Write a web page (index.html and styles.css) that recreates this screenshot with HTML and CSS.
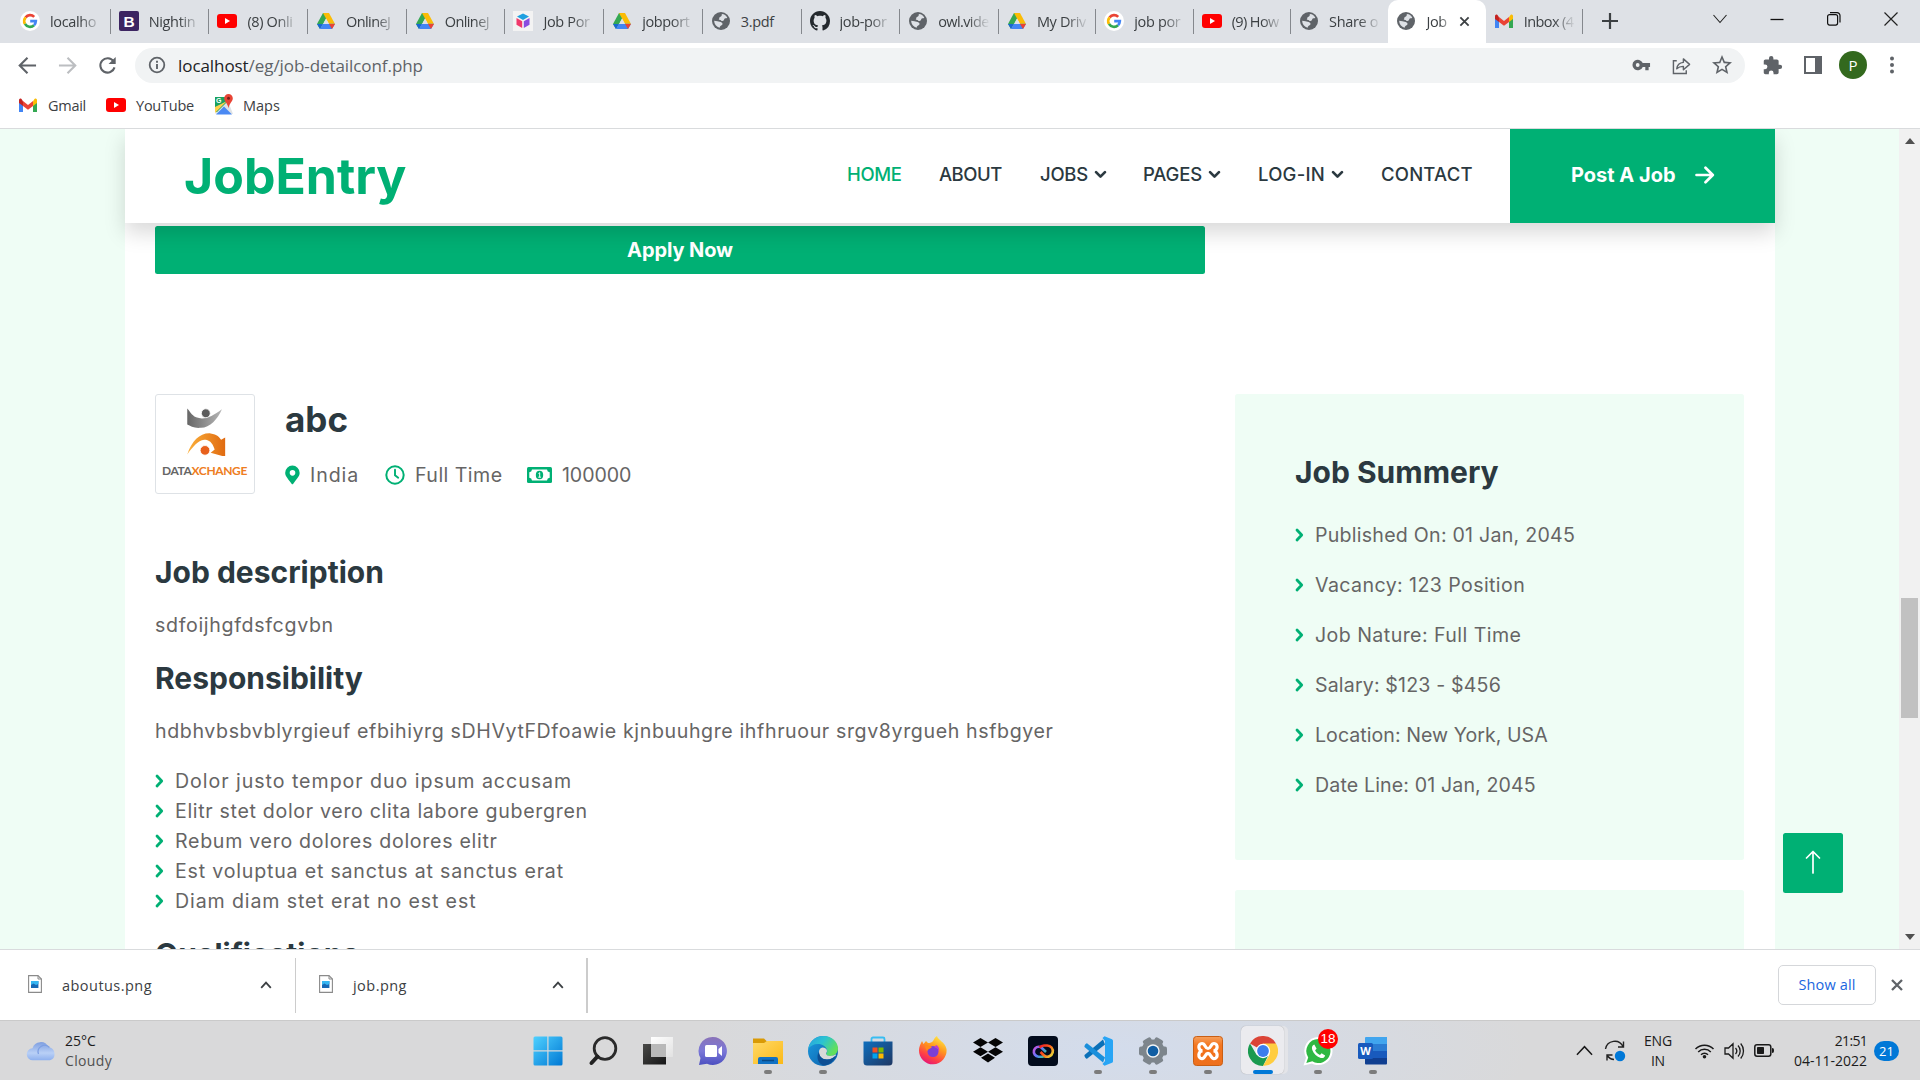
FILE: index.html
```html
<!DOCTYPE html>
<html lang="en">
<head>
<meta charset="utf-8">
<title>Job</title>
<link rel="stylesheet" href="styles.css">
</head>
<body>
<svg class="defs" aria-hidden="true">
  <defs>
    <linearGradient id="gWin" x1="0" y1="0" x2="1" y2="1"><stop offset="0" stop-color="#4fd1ff"/><stop offset="1" stop-color="#0078d4"/></linearGradient>
    <linearGradient id="gDark" x1="0" y1="0" x2="1" y2="1"><stop offset="0" stop-color="#4a4a48"/><stop offset="1" stop-color="#161616"/></linearGradient>
    <linearGradient id="gLight" x1="0" y1="0" x2="1" y2="1"><stop offset="0" stop-color="#fff"/><stop offset="1" stop-color="#e2e2e2"/></linearGradient>
    <linearGradient id="gChat" x1="0" y1="0" x2="0" y2="1"><stop offset="0" stop-color="#8a73b8"/><stop offset=".5" stop-color="#7b78d8"/><stop offset="1" stop-color="#4c4fc0"/></linearGradient>
    <linearGradient id="gFolder" x1="0" y1="0" x2="1" y2="1"><stop offset="0" stop-color="#ffd968"/><stop offset="1" stop-color="#fbb916"/></linearGradient>
    <linearGradient id="gEdgeTop" x1="0" y1="0" x2="1" y2=".5"><stop offset="0" stop-color="#2a9fe0"/><stop offset=".5" stop-color="#2bc3d2"/><stop offset="1" stop-color="#62e05a"/></linearGradient>
    <linearGradient id="gEdgeLow" x1="0" y1="0" x2="1" y2="1"><stop offset="0" stop-color="#1b9de2"/><stop offset="1" stop-color="#0c59a4"/></linearGradient>
    <linearGradient id="gStore" x1="0" y1="0" x2="1" y2="1"><stop offset="0" stop-color="#0f6fbe"/><stop offset="1" stop-color="#1f3763"/></linearGradient>
    <linearGradient id="gFox" x1=".8" y1="0" x2=".3" y2="1"><stop offset="0" stop-color="#fff04a"/><stop offset=".4" stop-color="#ff9a1e"/><stop offset=".75" stop-color="#ff3f45"/><stop offset="1" stop-color="#e3157a"/></linearGradient>
    <linearGradient id="gCloud" x1="0" y1="0" x2="0" y2="1"><stop offset="0" stop-color="#7f9fe0"/><stop offset=".6" stop-color="#b9d0f6"/><stop offset="1" stop-color="#8eb0ee"/></linearGradient>
    <linearGradient id="gCcL" gradientUnits="userSpaceOnUse" x1="5" y1="10" x2="19" y2="20"><stop offset="0" stop-color="#e34bd6"/><stop offset=".5" stop-color="#5b7cff"/><stop offset="1" stop-color="#2fd67a"/></linearGradient>
    <linearGradient id="gCcR" gradientUnits="userSpaceOnUse" x1="11" y1="9" x2="25" y2="20"><stop offset="0" stop-color="#e8142d"/><stop offset=".5" stop-color="#ff5a1a"/><stop offset="1" stop-color="#e6e23c"/></linearGradient>
    <linearGradient id="gXampp" x1="0" y1="0" x2="0" y2="1"><stop offset="0" stop-color="#f6a05c"/><stop offset=".3" stop-color="#f4761f"/><stop offset="1" stop-color="#ee6f1c"/></linearGradient>
    <linearGradient id="gOrange" x1="0" y1="0" x2="1" y2="0"><stop offset="0" stop-color="#fbb03b"/><stop offset="1" stop-color="#e06a10"/></linearGradient>
    <linearGradient id="gGrey" x1="0" y1="0" x2="1" y2="0"><stop offset="0" stop-color="#666"/><stop offset="1" stop-color="#b5b5b5"/></linearGradient>
  </defs>
  <symbol id="google" viewBox="0 0 20 20"><circle cx="10" cy="10" r="10" fill="#fff"/><g fill="none" stroke-width="2.7"><path d="M5.6 6.3A5.8 5.8 0 0 1 14.2 5.9" stroke="#ea4335"/><path d="M5 12.9A5.8 5.8 0 0 1 5.6 6.3" stroke="#fbbc05"/><path d="M14 14.2A5.8 5.8 0 0 1 5 12.9" stroke="#34a853"/><path d="M10.2 10.2H15.8A5.8 5.8 0 0 1 14 14.2" stroke="#4285f4"/></g></symbol>
  <symbol id="boot" viewBox="0 0 20 20"><rect width="20" height="20" rx="2" fill="#3d2562"/><text x="10" y="15.6" text-anchor="middle" font-family="Liberation Sans" font-weight="700" font-size="15.5" fill="#fff">B</text></symbol>
  <symbol id="yt" viewBox="0 0 20 20"><rect y="3" width="20" height="14" rx="3" fill="#f00"/><path d="M8 7v6l5-3z" fill="#fff"/></symbol>
  <symbol id="drive" viewBox="0 0 20 20"><path d="M7 2h6L7 13.500 4 18 1 13z" fill="#34a853"/><path d="M7 2h6l6 11h-6z" fill="#fbbc05"/><path d="M1 13h5.700L4 18z" fill="#1967d2"/><path d="M6.800 12.800H19L16 18H4z" fill="#4285f4"/><path d="M13 13h6l-3 5z" fill="#ea4335"/><path d="M10 7.500l3 5.400H7z" fill="#dee1e6"/></symbol>
  <symbol id="cube" viewBox="0 0 20 20"><path fill="#f3f3f3" d="M0 0h20v20H0z"/><path d="M10 2.500l6 3-6 3.400-6-3.400z" fill="#1e9fe0"/><path d="M3.500 7l5.700 3.300V17L3.500 13.800z" fill="#f0386b"/><path d="M16.500 7l-5.700 3.300V17l5.700-3.200z" fill="#8a4be0"/></symbol>
  <symbol id="globe" viewBox="0 0 20 20"><circle cx="10" cy="10" r="9" fill="#5f6368"/><path d="M10.800 3.100c2.500.2 4.500 1.500 5.500 3.700-1 .8-2.500.2-3.200 1.400.6 1.300-1.300 1.700-2.600 1.800-.5-1.200-1.700-1-2.800-1.200 1-.7 0-2 1.300-2.700 1.300-.4 2-1.500 1.800-3zM3.200 9.800c2 .3 4.500.7 6.500 1.200 1.300.5 2.300 1.300 1.600 2.700-.8.9-2.400.7-2.700 3-3-.6-5.400-3.500-5.400-6.900z" fill="#dee1e6"/></symbol>
  <symbol id="github" viewBox="0 0 16 16"><path fill="#24292e" d="M8 0C3.580 0 0 3.580 0 8c0 3.540 2.290 6.530 5.470 7.590.4.070.55-.17.55-.38 0-.19-.01-.82-.01-1.490-2.010.37-2.530-.49-2.690-.94-.09-.23-.48-.94-.82-1.130-.28-.15-.68-.52-.01-.53.63-.01 1.080.58 1.230.82.72 1.210 1.870.87 2.330.66.07-.52.28-.87.51-1.070-1.780-.2-3.640-.89-3.640-3.950 0-.87.31-1.590.82-2.150-.08-.2-.36-1.020.08-2.120 0 0 .67-.21 2.200.82.64-.18 1.320-.27 2-.27s1.360.09 2 .27c1.530-1.040 2.200-.82 2.200-.82.44 1.100.16 1.920.08 2.120.51.56.82 1.270.82 2.150 0 3.070-1.870 3.750-3.650 3.950.29.25.54.73.54 1.480 0 1.070-.01 1.930-.01 2.200 0 .21.15.46.55.38A8.010 8.010 0 0 0 16 8c0-4.420-3.580-8-8-8z"/></symbol>
  <symbol id="gmail" viewBox="0 0 20 20"><path d="M1 4.500V17h4V8z" fill="#4285f4"/><path d="M19 4.500V17h-4V8z" fill="#34a853"/><path d="M1 5.500V8l4 3V6.200L3.500 4C2 3 1 4 1 5.500z" fill="#c5221f"/><path d="M19 5.500V8l-4 3V6.200L16.500 4C18 3 19 4 19 5.500z" fill="#fbbc04"/><path d="M5 6l5 3.900L15 6v5l-5 3.800L5 11z" fill="#ea4335"/></symbol>
  <symbol id="maps" viewBox="0 0 20 24"><path d="M1 4h12v17L1 19z" fill="#1aa15f"/><path d="M1 21L14 8l5 13z" fill="#dfe3e6"/><path d="M2 21.500l8-8 8 8z" fill="#4a89f3"/><path d="M1 14v6L13 8z" fill="#ffd04c"/><text x="2" y="10" font-family="Liberation Sans" font-size="7" font-weight="700" fill="#fff">G</text><path d="M14.500 1a4.300 4.300 0 0 1 4.300 4.300c0 3.500-3.500 4.700-4.300 10-.8-5.300-4.300-6.500-4.300-10A4.300 4.300 0 0 1 14.500 1z" fill="#e84435"/><circle cx="14.500" cy="5.300" r="1.500" fill="#7a1f18"/></symbol>
  <symbol id="chev" viewBox="0 0 9 14"><path d="M2 2l4.700 5L2 12" fill="none" stroke="currentColor" stroke-width="2.800" stroke-linecap="round" stroke-linejoin="round"/></symbol>
  <symbol id="down" viewBox="0 0 14 10"><path d="M2.200 2.200L7 7l4.800-4.800" fill="none" stroke="currentColor" stroke-width="2.900" stroke-linecap="round" stroke-linejoin="round"/></symbol>
  <symbol id="file" viewBox="0 0 14 18"><path d="M.6.6h9.400l3.400 3.400v13.400H.6z" fill="#fff" stroke="#8a8a8a" stroke-width="1.100"/><path d="M10 .6V4h3.400" fill="none" stroke="#8a8a8a"/><path d="M3 6h7.400v7H3z" fill="#1668b5"/><path d="M3 6h7.400v3L8 10 5.500 8.500 3 10z" fill="#35b6f2"/></symbol>
  <symbol id="up" viewBox="0 0 12 8"><path d="M1.200 6.800L6 1.600l4.800 5.200" fill="none" stroke="currentColor" stroke-width="1.800"/></symbol>
</svg>

<div class="tabs">
  <div class="tab"><svg><use href="#google"/></svg><span>localho</span></div>
  <div class="tab"><svg><use href="#boot"/></svg><span>Nightin</span></div>
  <div class="tab"><svg><use href="#yt"/></svg><span>(8) Onli</span></div>
  <div class="tab"><svg><use href="#drive"/></svg><span class="tight">OnlineJ</span></div>
  <div class="tab"><svg><use href="#drive"/></svg><span class="tight">OnlineJ</span></div>
  <div class="tab"><svg><use href="#cube"/></svg><span>Job Por</span></div>
  <div class="tab"><svg><use href="#drive"/></svg><span>jobport</span></div>
  <div class="tab"><svg><use href="#globe"/></svg><span class="full">3.pdf</span></div>
  <div class="tab"><svg><use href="#github"/></svg><span>job-por</span></div>
  <div class="tab"><svg><use href="#globe"/></svg><span class="tight">owl.vide</span></div>
  <div class="tab narrow"><svg><use href="#drive"/></svg><span>My Driv</span></div>
  <div class="tab narrow"><svg><use href="#google"/></svg><span>job por</span></div>
  <div class="tab narrow"><svg><use href="#yt"/></svg><span class="tight">(9) How</span></div>
  <div class="tab narrow last"><svg><use href="#globe"/></svg><span>Share o</span></div>
  <div class="tab narrow active"><svg><use href="#globe"/></svg><span>Job</span><svg class="x" viewBox="0 0 12 12"><path d="M1.500 1.500l9 9M10.500 1.500l-9 9" stroke="#3c4043" stroke-width="2"/></svg></div>
  <div class="tab narrow"><svg><use href="#gmail"/></svg><span class="tight">Inbox (4</span></div>
  <svg class="plus" viewBox="0 0 16 16"><path d="M8 0v16M0 8h16" stroke="#3c4043" stroke-width="2.200"/></svg>
  <div class="win">
    <svg viewBox="0 0 16 16"><path d="M1.500 4L8 11.500 14.500 4" fill="none" stroke="#222" stroke-width="1.100"/></svg>
    <svg viewBox="0 0 16 16"><path d="M1.500 8.500h13" stroke="#111" stroke-width="1.300"/></svg>
    <svg viewBox="0 0 16 16"><rect x="1.600" y="3.600" width="10" height="10.500" rx="2" fill="none" stroke="#111" stroke-width="1.200"/><path d="M4 1.600h7a3 3 0 0 1 3 3v7" fill="none" stroke="#111" stroke-width="1.200"/></svg>
    <svg viewBox="0 0 16 16"><path d="M1.500 1.500l13 13M14.500 1.500l-13 13" stroke="#222" stroke-width="1.200"/></svg>
  </div>
</div>

<div class="toolbar">
  <div class="navbtns">
    <svg viewBox="0 0 20 20"><path d="M19 10H2M10 1.800L1.800 10l8.200 8.200" fill="none" stroke="#5f6368" stroke-width="2.200"/></svg>
    <svg viewBox="0 0 20 20"><path d="M1 10h17M10 1.800l8.200 8.200-8.200 8.200" fill="none" stroke="#bcbec1" stroke-width="2.200"/></svg>
    <svg viewBox="0 0 20 20"><path d="M16.300 5.500A7.600 7.600 0 1 0 17.400 12" fill="none" stroke="#5f6368" stroke-width="2.200"/><path d="M18.600 1v7.500h-7.500z" fill="#5f6368"/></svg>
  </div>
  <div class="omni">
    <svg viewBox="0 0 18 18"><circle cx="9" cy="9" r="7.300" fill="none" stroke="#5f6368" stroke-width="1.800"/><path d="M9 8v5M9 4.800v2" stroke="#5f6368" stroke-width="1.900"/></svg>
    <span class="url"><b>localhost</b>/eg/job-detailconf.php</span>
    <svg class="key" viewBox="0 0 20 12"><path fill="#5f6368" fill-rule="evenodd" d="M11.300 4A5.600 5.600 0 1 0 11.300 8H14v3.500h3.500V8H19V4zM6 4a2 2 0 1 1 0 4 2 2 0 0 1 0-4z"/></svg>
    <svg viewBox="0 0 20 20"><path d="M5 5H1.500v13.500H15V15" fill="none" stroke="#5f6368" stroke-width="1.500"/><path d="M5 13.500c.5-4.500 3-6.500 7-6.800V3l6.500 5.800-6.500 5.700v-3.600c-3-.1-5 .6-7 2.600z" fill="none" stroke="#5f6368" stroke-width="1.500" stroke-linejoin="round"/></svg>
    <svg viewBox="0 0 24 24"><path fill="#5f6368" d="M22 9.240l-7.190-.62L12 2 9.190 8.630 2 9.240l5.460 4.730L5.820 21 12 17.270 18.180 21l-1.630-7.030L22 9.240zM12 15.400l-3.760 2.270 1-4.280-3.320-2.880 4.380-.38L12 6.100l1.710 4.040 4.380.38-3.320 2.880 1 4.280L12 15.400z"/></svg>
  </div>
  <svg class="t1" viewBox="0 0 24 24"><path fill="#5f6368" d="M20.500 11H19V7c0-1.100-.9-2-2-2h-4V3.500a2.500 2.500 0 0 0-5 0V5H4c-1.100 0-1.990.9-1.990 2v3.800H3.500a2.700 2.700 0 0 1 0 5.400H2V20c0 1.100.9 2 2 2h3.800v-1.500a2.700 2.700 0 0 1 5.400 0V22H17c1.100 0 2-.9 2-2v-4h1.500a2.500 2.500 0 0 0 0-5z"/></svg>
  <svg class="t2" viewBox="0 0 18 18"><path fill="#5f6368" fill-rule="evenodd" d="M0 0h18v18H0zM2 2v14h9V2z"/></svg>
  <div class="avatar">P</div>
  <svg class="t3" viewBox="0 0 4 18"><g fill="#5f6368"><circle cx="2" cy="2.500" r="2"/><circle cx="2" cy="9" r="2"/><circle cx="2" cy="15.500" r="2"/></g></svg>
</div>

<div class="marks">
  <svg><use href="#gmail"/></svg><span class="m1">Gmail</span>
  <svg><use href="#yt"/></svg><span class="m2">YouTube</span>
  <svg class="mapi"><use href="#maps"/></svg><span class="m3">Maps</span>
</div>

<div class="view">
  <main class="sheet">
    <header>
      <div class="brand">JobEntry</div>
      <nav>
        <a class="n1 on"><span>HOME</span></a>
        <a class="n2"><span>ABOUT</span></a>
        <a class="n3"><span>JOBS</span><svg><use href="#down"/></svg></a>
        <a class="n4"><span>PAGES</span><svg><use href="#down"/></svg></a>
        <a class="n5"><span>LOG-IN</span><svg><use href="#down"/></svg></a>
        <a class="n6"><span>CONTACT</span></a>
      </nav>
      <a class="post"><span>Post A Job</span><svg viewBox="0 0 20 18"><path d="M1.500 9h16M10.500 1.700L17.800 9l-7.300 7.300" fill="none" stroke="#fff" stroke-width="2.700" stroke-linecap="round" stroke-linejoin="round"/></svg></a>
    </header>
    <button class="apply">Apply Now</button>
    <div class="cols">
      <section class="left">
        <div class="head">
          <div class="logo">
            <svg viewBox="0 0 60 62"><path d="M8 3c3 3 5 8 11 11 10 4 20-1 32-10-5 12-15 23-26 23-8 1-13-2-17-4z" fill="url(#gGrey)"/><circle cx="31" cy="9" r="5.500" fill="#5c5c5c" stroke="#fff"/><path d="M8 60c6-17 16-27 29-26 8 1 11 5 13 8l5-3v24l-18-5 5-4c-3-9-7-12-13-12-8 1-14 9-21 18z" fill="url(#gOrange)"/><circle cx="30" cy="55" r="6" fill="#e8601c" stroke="#fff"/></svg>
            <div class="lname">DATA<i>XCHANGE</i></div>
          </div>
          <div>
            <h3>abc</h3>
            <div class="meta">
              <svg class="pin" viewBox="0 0 16 20"><path fill="#00b074" fill-rule="evenodd" d="M7.200 19.600C1.500 12 .2 10.700.2 7.600a7.700 7.700 0 0 1 15.400 0c0 3.100-1.200 4.300-7 12-.4.500-1 .5-1.400 0zM8 4.700a3 3 0 1 0 0 6 3 3 0 0 0 0-6z"/></svg><span class="s1">India</span>
              <svg class="clk" viewBox="0 0 20 20"><circle cx="10" cy="10" r="8.700" fill="none" stroke="#00b074" stroke-width="2"/><path d="M10 4.800v5.400l3.200 2.500" fill="none" stroke="#00b074" stroke-width="1.900" stroke-linecap="round"/></svg><span class="s2">Full Time</span>
              <svg class="bill" viewBox="0 0 25 16"><rect width="25" height="16" rx="1.500" fill="#00b074"/><path d="M5 2.500h15a3 3 0 0 0 2.700 2.700v5.600A3 3 0 0 0 20 13.500H5a3 3 0 0 0-2.700-2.700V5.200A3 3 0 0 0 5 2.500z" fill="#fff"/><ellipse cx="12.500" cy="8" rx="3.700" ry="4.300" fill="#00b074"/><path d="M11.500 6.500l1.200-.8v4.500M11.300 10.200h2.600" stroke="#fff" fill="none"/></svg><span class="s3">100000</span>
            </div>
          </div>
        </div>
        <h4>Job description</h4>
        <p class="p1">sdfoijhgfdsfcgvbn</p>
        <h4>Responsibility</h4>
        <p class="p2">hdbhvbsbvblyrgieuf efbihiyrg sDHVytFDfoawie kjnbuuhgre ihfhruour srgv8yrgueh hsfbgyer</p>
        <ul class="duties">
          <li><svg><use href="#chev"/></svg><span>Dolor justo tempor duo ipsum accusam</span></li>
          <li><svg><use href="#chev"/></svg><span>Elitr stet dolor vero clita labore gubergren</span></li>
          <li><svg><use href="#chev"/></svg><span>Rebum vero dolores dolores elitr</span></li>
          <li><svg><use href="#chev"/></svg><span>Est voluptua et sanctus at sanctus erat</span></li>
          <li><svg><use href="#chev"/></svg><span>Diam diam stet erat no est est</span></li>
        </ul>
        <h4>Qualifications</h4>
      </section>
      <aside>
        <div class="card">
          <h4>Job Summery</h4>
          <ul class="facts">
            <li><svg><use href="#chev"/></svg><span>Published On: 01 Jan, 2045</span></li>
            <li><svg><use href="#chev"/></svg><span>Vacancy: 123 Position</span></li>
            <li><svg><use href="#chev"/></svg><span>Job Nature: Full Time</span></li>
            <li><svg><use href="#chev"/></svg><span>Salary: $123 - $456</span></li>
            <li><svg><use href="#chev"/></svg><span>Location: New York, USA</span></li>
            <li><svg><use href="#chev"/></svg><span>Date Line: 01 Jan, 2045</span></li>
          </ul>
        </div>
        <div class="card"></div>
      </aside>
    </div>
  </main>
  <a class="totop"><svg viewBox="0 0 16 24"><path d="M8 23V1.500M1.500 8L8 1.500 14.500 8" fill="none" stroke="#fff" stroke-width="1.700" stroke-linecap="round" stroke-linejoin="round"/></svg></a>
  <div class="scroll">
    <svg viewBox="0 0 10 6"><path d="M0 6h10L5 0z" fill="#505050"/></svg>
    <div class="thumb"></div>
    <svg viewBox="0 0 10 6"><path d="M0 0h10L5 6z" fill="#505050"/></svg>
  </div>
</div>

<div class="downloads">
  <div class="dl"><svg class="f"><use href="#file"/></svg><span>aboutus.png</span><svg class="u"><use href="#up"/></svg></div>
  <div class="dl second"><svg class="f"><use href="#file"/></svg><span>job.png</span><svg class="u"><use href="#up"/></svg></div>
  <button class="showall">Show all</button>
  <svg class="dx" viewBox="0 0 12 12"><path d="M1 1l10 10M11 1L1 11" stroke="#5f6368" stroke-width="2.300"/></svg>
</div>

<div class="taskbar">
  <div class="weather">
    <svg viewBox="0 0 30 20"><path d="M6.500 19.300a6 6 0 0 1-.5-12 8.500 8.500 0 0 1 16-1 6.700 6.700 0 0 1 1.500 13z" fill="url(#gCloud)"/><path d="M12 13a6.500 6.500 0 0 1 11-6.500" fill="none" stroke="#7d9fe3" stroke-width="1.300"/></svg>
    <div><span>25°C</span><em>Cloudy</em></div>
  </div>
  <div class="apps">
    <div class="app"><svg viewBox="0 0 30 30"><path fill="url(#gWin)" d="M.5 2a1.500 1.500 0 0 1 1.500-1.500h12.300v13.800H.5zM15.500.5h12.500A1.500 1.500 0 0 1 29.500 2v12.300h-14zM.5 15.500h13.800v14H2A1.500 1.500 0 0 1 .5 28zM15.500 15.500h14V28a1.500 1.500 0 0 1-1.500 1.500H15.500z"/></svg></div>
    <div class="app"><svg viewBox="0 0 30 30"><circle cx="17" cy="12.500" r="10.800" fill="none" stroke="#2a2a2a" stroke-width="2.800"/><path d="M9.500 20.500l-6 6.500" stroke="#222" stroke-width="4" stroke-linecap="round"/></svg></div>
    <div class="app"><svg viewBox="0 0 30 30"><path d="M0 8h23v20.500H0z" fill="url(#gDark)"/><rect x="8" y="1" width="22" height="20" fill="url(#gLight)"/><path d="M8 8h15v13H8z" fill="#b9b9b9"/></svg></div>
    <div class="app"><svg viewBox="0 0 30 30"><path d="M15 1a14 14 0 1 1-6 26.700L1 29l1.500-7A14 14 0 0 1 15 1z" fill="url(#gChat)"/><rect x="7" y="9" width="12" height="12" rx="1.500" fill="#fff"/><path d="M20.500 13l3.500-3v10l-3.500-3z" fill="#fff"/></svg></div>
    <div class="app run"><svg viewBox="0 0 30 30"><path d="M0 2.500h11l3 3v6H0z" fill="#d99a06"/><path d="M0 7h11l3-2h16v23H0z" fill="url(#gFolder)"/><path d="M5 28v-5a2 2 0 0 1 2-2h16a2 2 0 0 1 2 2v5z" fill="#1272c4"/><path d="M9 24.500h12" stroke="#0a4a86" stroke-width="1.500"/></svg></div>
    <div class="app run"><svg viewBox="0 0 30 30"><circle cx="15" cy="15" r="15" fill="url(#gEdgeLow)"/><path d="M.2 13C1.500 5 8 0 15.500 0 24 0 30 6 30 12.500c0 5-4 7.500-7.800 7.500-3 0-4.500-1-4.200-2 .8-1 1.500-2.300 1-4C18 10.500 14.500 8 10 8 5.500 8 2 10 .2 13z" fill="url(#gEdgeTop)"/><path d="M11 16c0-2.500 1.300-4.200 3.500-4.500 2.500 0 4.500 1.500 4.500 3.500 0 1.200-1 2-1 3 .3 1.300 2 2 4.200 2 2.300 0 4-.8 5.300-1.500.5 0 .8.300.4 1C26 21.500 23 23.500 19 23.500c-5 0-8-3.500-8-7.500z" fill="#d9d9d9"/><path d="M11 16c0 4 3 7.500 8 7.500 4 0 7-2 8.500-4 .6.300-2.500 8-10.500 10-4 0-7.500-4-7.500-8.500 0-2 .5-4 1.500-5z" fill="#0e4f94"/></svg></div>
    <div class="app"><svg viewBox="0 0 30 30"><path d="M8.500 7V3a1.500 1.500 0 0 1 1.500-1.500h10A1.500 1.500 0 0 1 21.500 3v4" fill="none" stroke="#38bdf2" stroke-width="1.800"/><path d="M.5 5.500h29V26a3.500 3.500 0 0 1-3.500 3.500H4A3.500 3.500 0 0 1 .5 26z" fill="url(#gStore)"/><path d="M9.500 11.500h5v5h-5z" fill="#f25022"/><path d="M15.500 11.500h5v5h-5z" fill="#7fba00"/><path d="M9.500 17.500h5v5h-5z" fill="#00a4ef"/><path d="M15.500 17.500h5v5h-5z" fill="#ffb900"/></svg></div>
    <div class="app"><svg viewBox="0 0 30 30"><path d="M19 0c1 4 8 6 9.500 13A13.800 13.800 0 1 1 1 14c0-3 1.500-6 3-9l1.500 3L8 5l2 2c2 0 4-.5 5-2s2-4 4-5z" fill="url(#gFox)"/><circle cx="15" cy="15.500" r="5.500" fill="#7b3fd6"/><path d="M7 9c3 0 4 1 7 2-2 2-4 2-5 4-1-2-2-3-2-6z" fill="#ff8a1c"/><path d="M18 9c3 1 4 5 2.500 8 1-3-1-5-4-5.500z" fill="#c03bd0"/></svg></div>
    <div class="app"><svg viewBox="0 0 30 30"><path d="M7.500 2L15 6.500 7.500 11 0 6.500zM22.500 2L30 6.500 22.500 11 15 6.500zM7.500 11.200L15 15.700 7.500 20.200 0 15.700zM22.500 11.200L30 15.700l-7.500 4.500L15 15.700zM15 17.500l7 4.300-7 4.700-7-4.700z" fill="#050505"/></svg></div>
    <div class="app"><svg viewBox="0 0 30 30"><rect width="30" height="30" rx="4" fill="#020b1c"/><path d="M18 19.500a6 6 0 0 1-4 1.200h-3.500a5 5 0 1 1 2.500-9.500L18 16" fill="none" stroke="url(#gCcL)" stroke-width="2.600"/><path d="M11.500 11.500A6.500 6.500 0 0 1 16 9.500h3a5.600 5.600 0 1 1-2.500 10.500L12.500 16" fill="none" stroke="url(#gCcR)" stroke-width="2.600"/></svg></div>
    <div class="app run"><svg viewBox="0 0 30 30"><path d="M1.500 19L20 3.500l2 5-18 14.300c-1 0-3-2.300-2.500-3.800z" fill="#0a70b8"/><path d="M1.500 11L20 26.500l2-5L4 7.200C3 7.200 1 9.500 1.500 11z" fill="#1a8fdb"/><path d="M21.500.3L29 3.300q1 .5 1 1.500v20.400q0 1-1 1.500l-7.500 3L19.500 28l2.500-3V5l-2.500-3z" fill="#28a5f5"/></svg></div>
    <div class="app run"><svg viewBox="0 0 30 30"><g fill="#7d858c"><circle cx="15" cy="15" r="11.500"/><rect x="10.500" y="1" width="9" height="28" rx="2" transform="rotate(30 15 15)"/><rect x="10.500" y="1" width="9" height="28" rx="2" transform="rotate(90 15 15)"/><rect x="10.500" y="1" width="9" height="28" rx="2" transform="rotate(150 15 15)"/></g><circle cx="15" cy="15" r="6.700" fill="#f2f4f6"/><circle cx="15" cy="15" r="5.300" fill="#115ea3"/></svg></div>
    <div class="app run"><svg viewBox="0 0 30 30"><rect x=".5" y=".5" width="29" height="29" rx="3" fill="url(#gXampp)" stroke="#c95f14"/><path d="M9.500 14.800C5 15 4.500 7.500 9 7.500c3.500 0 3 5 6 5s2.500-5 6-5c4.500 0 4 7.500-.5 7.300 4.500-.2 5 7.800.5 7.800-3.500 0-3-5.300-6-5.300s-2.500 5.300-6 5.300c-4.500 0-4-8 .5-7.800z" fill="none" stroke="#fff" stroke-width="3.200"/></svg></div>
    <div class="app run chrome"><svg viewBox="0 0 30 30"><path d="M15 15L2 7.500A15 15 0 0 1 28 7.500z" fill="#db4437"/><path d="M8.500 18.700L15 15l5 5-5 10A15 15 0 0 1 2 7.500z" fill="#1a9a50"/><path d="M21.500 18.700L15 30A15 15 0 0 0 28 7.500H15z" fill="#ffcd40"/><circle cx="15" cy="15" r="7.200" fill="#fff"/><circle cx="15" cy="15" r="5.900" fill="#3b7ded"/></svg></div>
    <div class="app run"><svg viewBox="0 0 30 30"><path d="M15.500 1A14 14 0 0 1 15.500 29c-2.500 0-4.700-.5-6.500-1.600L.5 29.500 3 21.700A14 14 0 0 1 15.500 1z" fill="#fff"/><path d="M15.500 3A12 12 0 1 1 9.300 25.300l-6 1.800 1.900-5.700A12 12 0 0 1 15.500 3z" fill="#2fb843"/><path d="M11.300 8.500c-2 .5-3 2.700-2 5.500 1.500 4 4.500 6.800 8.500 8 2.200.5 4-.7 4.300-2.500l-3.500-2.200-1.600 1.700c-2.500-1-4-2.600-4.900-4.700l1.500-1.600z" fill="#fff"/></svg><span class="badge">18</span></div>
    <div class="app run"><svg viewBox="0 0 30 30"><path d="M8 1h21v7H7V2q0-1 1-1z" fill="#41a5ee"/><path d="M7 8h22v7H7z" fill="#2b7cd3"/><path d="M7 15h22v7H7z" fill="#185abd"/><path d="M7 22h22v5.500q0 1-1 1H8q-1 0-1-1z" fill="#103f91"/><rect y="7" width="15" height="16" rx="1.500" fill="#185abd"/><text x="7.500" y="19" text-anchor="middle" font-family="Open Sans" font-weight="700" font-size="11" fill="#fff">W</text></svg></div>
  </div>
  <div class="tray">
    <svg class="y1" viewBox="0 0 18 11"><path d="M1 10l8-8.500L17 10" fill="none" stroke="#1a1a1a" stroke-width="1.600"/></svg>
    <svg class="y2" viewBox="0 0 22 22"><path d="M1.500 9A9.300 9.300 0 0 1 19 6.500M19.500 1.500v5.500H14M10 19.500A9 9 0 0 1 3.500 16M3 20.500V15h5.500" fill="none" stroke="#222" stroke-width="1.400"/><circle cx="16" cy="16" r="5.200" fill="#0078d7"/></svg>
    <div class="lang"><span>ENG</span><span>IN</span></div>
    <svg class="y3" viewBox="0 0 20 16"><g fill="none" stroke="#1a1a1a" stroke-width="1.500"><path d="M1 6a12.500 12.500 0 0 1 18 0M3.700 9a8.700 8.700 0 0 1 12.600 0M6.500 11.800a5 5 0 0 1 7 0"/></g><circle cx="10" cy="13.800" r="1.800" fill="#1a1a1a"/></svg>
    <svg class="y4" viewBox="0 0 21 18"><g fill="none" stroke="#1a1a1a" stroke-width="1.300"><path d="M1 6h3.500L9 1.800v14.400L4.500 12H1zM11.500 6a4.500 4.500 0 0 1 0 6M14 3.500a8 8 0 0 1 0 11M16.700 1.500a11.500 11.500 0 0 1 0 15"/></g></svg>
    <svg class="y5" viewBox="0 0 20 13"><rect x=".8" y=".8" width="16" height="11.400" rx="2.200" fill="none" stroke="#1a1a1a" stroke-width="1.500"/><rect x="3" y="3" width="7" height="7" rx=".7" fill="#1a1a1a"/><path d="M18 4v5c1.500 0 2-.8 2-2.500S19.500 4 18 4z" fill="#1a1a1a"/></svg>
    <div class="clock"><span class="time">21:51</span><span>04-11-2022</span></div>
    <div class="note">21</div>
  </div>
</div>
</body>
</html>
```
FILE: styles.css
```css
* { box-sizing: border-box; }
body { margin: 0; width: 1920px; height: 1080px; overflow: hidden; display: flex; flex-direction: column; background: #fff; font-family: "Open Sans", "Noto Sans", sans-serif; font-size: 14.5px; color: #3c4043; }
svg { display: block; flex: none; }
span { white-space: nowrap; }
button { font: inherit; border: 0; padding: 0; }
h3, h4, p, ul { margin: 0; padding: 0; list-style: none; }
.defs { position: absolute; left: 0; top: 0; width: 0; height: 0; }

/* Tab strip */
.tabs { height: 43px; background: #dee1e6; display: flex; padding-left: 12px; flex: none; }
.tab { width: 98.7px; height: 43px; display: flex; align-items: center; padding: 0 0 1px 8px; position: relative; flex: none; }
.tab.narrow { width: 97.4px; }
.tab svg { width: 20px; height: 20px; }
.tab span { margin-left: 10px; width: 54px; letter-spacing: -.35px; mask-image: linear-gradient(90deg, #000 55%, transparent 96%); }
.tab span.tight { letter-spacing: -.6px; }
.tab span.full { mask-image: none; }
.tab::after { content: ""; position: absolute; right: 0; top: 9px; width: 1px; height: 25px; background: #85888d; }
.tab.last::after, .tab.active::after { display: none; }
.tab.active { background: #fff; border-radius: 10px 10px 0 0; }
.tab.active span { width: 23px; mask-image: linear-gradient(90deg, #000 60%, rgba(0, 0, 0, .3)); }
.tab svg.x { width: 11px; height: 11px; margin-left: 10px; }
.plus { width: 16px; height: 16px; margin: 13px 0 0 19px; }
.win { margin-left: auto; display: flex; gap: 41px; padding: 11px 21px 0 0; }
.win svg { width: 16px; height: 16px; }

/* Toolbar */
.toolbar { height: 46px; flex: none; display: flex; align-items: center; padding: 0 26px 2px 18px; }
.navbtns { display: flex; gap: 21px; width: 117px; }
.navbtns svg { width: 19px; height: 19px; }
.omni { width: 1610px; height: 35px; border-radius: 18px; background: #f1f3f4; display: flex; align-items: center; padding: 0 11px 0 13px; }
.omni svg { width: 19px; height: 19px; margin-right: 19px; }
.omni svg:first-child { width: 18px; height: 18px; margin-right: 12px; }
.omni svg:last-child { width: 24px; height: 24px; margin: 0; }
.omni svg.key { width: 19px; height: 12px; margin-right: 21px; }
.url { font-size: 17px; letter-spacing: -.07px; color: #5f6368; margin-right: auto; }
.url b { font-weight: 400; color: #202124; }
.t1 { width: 21px; height: 21px; margin-left: 17px; }
.t2 { width: 18px; height: 18px; margin-left: 21px; }
.avatar { width: 28px; height: 28px; border-radius: 50%; background: #33691e; color: #fff; font-size: 15px; display: flex; align-items: center; justify-content: center; margin-left: 17px; }
.t3 { width: 4px; height: 18px; margin-left: auto; }

/* Bookmarks bar */
.marks { height: 40px; flex: none; border-bottom: 1px solid #d9dbdd; display: flex; align-items: center; padding: 0 0 7px 18px; }
.marks svg { width: 20px; height: 20px; }
.marks svg.mapi { width: 20px; height: 24px; }
.m1 { margin: 0 20px 0 10px; letter-spacing: -.27px; }
.m2 { margin: 0 20px 0 10px; letter-spacing: -.23px; }
.m3 { margin-left: 9px; }

/* Page */
.view { height: 820px; flex: none; position: relative; overflow: hidden; background: #effdf5; padding-left: 125px; display: flex; justify-content: space-between; font-family: Inter, "Noto Sans", sans-serif; }
.sheet { width: 1650px; background: #fff; }
header { height: 94px; display: flex; align-items: center; background: #fff; box-shadow: 0 10px 20px rgba(0, 0, 0, .15); position: relative; z-index: 2; padding-left: 59px; }
.brand { font-size: 50px; line-height: 94px; font-weight: 700; color: #00b074; white-space: nowrap; width: 663px; }
nav { display: flex; font-size: 18.500px; font-weight: 480; color: #2b3940; width: 663px; padding-bottom: 4px; }
nav a { display: flex; align-items: center; }
nav svg { width: 13px; height: 9.500px; margin: 2px 0 0 6px; }
nav .on { color: #00b074; }
.n1 { width: 92px; letter-spacing: -.4px; }
.n2 { width: 101px; letter-spacing: -.5px; }
.n3 { width: 103px; letter-spacing: -.23px; }
.n4 { width: 115px; letter-spacing: -.17px; }
.n5 { width: 123px; letter-spacing: .24px; }
.n6 { letter-spacing: .2px; }
.post { width: 265px; height: 94px; background: #00b074; color: #fff; font-weight: 700; font-size: 20px; display: flex; align-items: center; padding: 0 0 3px 61px; }
.post span { width: 124px; }
.post svg { width: 20px; height: 18px; }
.apply { display: block; width: 1050px; height: 48px; margin: 3px 0 0 30px; border-radius: 2.500px; background: #00b074; color: #fff; font-weight: 700; font-size: 20px; letter-spacing: -.1px; }
.cols { display: flex; padding: 120px 31px 0 30px; justify-content: space-between; }
.head { display: flex; align-items: center; gap: 30px; height: 100px; margin-bottom: 60px; }
.logo { width: 100px; height: 100px; border: 1px solid #dee2e6; border-radius: 3px; padding: 11px 6px 0; }
.logo svg { width: 56px; height: 50px; margin: 0 auto; }
.lname { font: 700 12px/16px Lato, sans-serif; color: #666; margin-top: 7px; white-space: nowrap; letter-spacing: -.38px; }
.lname i { font-style: normal; color: #ee7d22; }
h3 { font-size: 35px; line-height: 42px; font-weight: 700; color: #2b3940; margin-bottom: 20px; }
h4 { font-size: 30px; line-height: 36px; font-weight: 700; color: #2b3940; margin-bottom: 20px; }
p, .meta, li { font-size: 19.600px; line-height: 30px; color: #666565; }
p { margin-bottom: 20px; white-space: nowrap; }
.p1 { letter-spacing: .67px; }
.p2 { letter-spacing: .61px; }
.meta { display: flex; align-items: center; height: 30px; }
.pin { width: 15px; height: 20px; margin-right: 10px; }
.clk { width: 20px; height: 20px; margin-right: 10px; }
.bill { width: 25px; height: 16px; margin-right: 10px; }
.s1 { letter-spacing: .9px; width: 49px; margin-right: 26px; }
.s2 { letter-spacing: .45px; width: 87px; margin-right: 25px; }
.s3 { letter-spacing: -.1px; }
ul { margin-bottom: 20px; }
li { display: flex; height: 30px; align-items: center; }
li svg { width: 9px; height: 14px; color: #00b074; margin-right: 11px; }
.duties li:nth-child(1) { letter-spacing: .96px; }
.duties li:nth-child(2) { letter-spacing: .67px; }
.duties li:nth-child(3) { letter-spacing: .7px; }
.duties li:nth-child(4) { letter-spacing: .8px; }
.duties li:nth-child(5) { letter-spacing: .87px; }
.facts li:nth-child(1) { letter-spacing: .24px; }
.facts li:nth-child(2) { letter-spacing: .4px; }
.facts li:nth-child(3) { letter-spacing: .43px; }
.facts li:nth-child(4) { letter-spacing: .15px; }
.facts li:nth-child(5) { letter-spacing: .03px; }
.facts li:nth-child(6) { letter-spacing: .13px; }
aside { width: 509px; }
.card { background: #effdf5; border-radius: 2.500px; padding: 60px; height: 466px; margin-bottom: 30px; }
.card h4 { margin-bottom: 30px; }
.card li { margin-bottom: 20px; }
.totop { position: absolute; left: 1783px; top: 704px; width: 60px; height: 60px; background: #00b074; border-radius: 2.500px; display: flex; align-items: center; justify-content: center; padding-bottom: 3px; }
.totop svg { width: 16px; height: 24px; }
.scroll { width: 21px; background: #f1f1f1; display: flex; flex-direction: column; align-items: center; justify-content: space-between; padding: 9px 0; }
.scroll svg { width: 10px; height: 6px; }
.thumb { width: 17px; height: 120px; background: #c1c1c1; margin-top: 324px; margin-bottom: 86px; }

/* Downloads shelf */
.downloads { height: 71px; flex: none; border-top: 1px solid #d9dbdd; background: #fff; display: flex; align-items: center; }
.dl { width: 296px; height: 55px; border-right: 1px solid #ccc; display: flex; align-items: center; padding: 0 23px 0 28px; letter-spacing: .46px; }
.dl.second { width: 292px; border-right: 2px solid #ccc; padding-left: 23px; padding-right: 22px; }
.dl .f { width: 14px; height: 18px; margin: 0 20px 3px 0; }
.dl .u { width: 12px; height: 8px; margin-left: auto; }
.showall { width: 98px; height: 40px; margin-left: auto; border: 1px solid #d5d7da; border-radius: 5px; background: #fff; color: #1a66e0; letter-spacing: .13px; padding-bottom: 2px; }
.dx { width: 12px; height: 12px; margin: 0 17px 0 15px; }

/* Taskbar */
.taskbar { height: 60px; flex: none; border-top: 1px solid #cacaca; background: radial-gradient(ellipse 420px 120px at 1110px 30px, #d3dcec, #d9d9da); display: flex; align-items: center; font-size: 14px; line-height: 20px; color: #1c1c1c; }
.weather { display: flex; width: 520px; align-items: center; padding-left: 26px; }
.weather svg { width: 31px; height: 20px; margin-right: 8px; }
.weather div { display: flex; flex-direction: column; align-items: flex-start; }
.weather em { font-style: normal; color: #505050; letter-spacing: .34px; }
.apps { display: flex; }
.app { width: 55px; height: 59px; display: flex; align-items: center; justify-content: center; position: relative; }
.app svg { width: 30px; height: 30px; position: relative; }
.run::after { content: ""; position: absolute; left: 24px; bottom: 6px; width: 8px; height: 4px; border-radius: 2px; background: #7c7c7c; }
.chrome::before { content: ""; position: absolute; left: 6px; top: 5px; width: 43px; height: 48px; border-radius: 5px; background: #ebebef; box-shadow: 0 0 1px #999, 4px 0 0 #e3e4e8; }
.run.chrome::after { left: 18px; width: 20px; background: #0078d7; }
.badge { position: absolute; left: 28px; top: 8px; width: 20px; height: 20px; border-radius: 50%; background: #f00; color: #fff; font: 13.500px/20px "Liberation Sans", sans-serif; text-align: center; }
.tray { margin-left: auto; display: flex; align-items: center; padding-right: 21px; }
.y1 { width: 17px; height: 11px; margin-right: 11px; }
.y2 { width: 22px; height: 22px; margin-right: 18px; }
.lang { display: flex; flex-direction: column; align-items: center; width: 28px; margin-right: 22px; letter-spacing: -.17px; }
.y3 { width: 21px; height: 16px; margin-right: 9px; }
.y4 { width: 21px; height: 18px; margin-right: 9px; }
.y5 { width: 20px; height: 13px; margin-right: 20px; }
.clock { display: flex; flex-direction: column; align-items: flex-end; margin-right: 7px; }
.time { letter-spacing: -.7px; }
.note { width: 25px; height: 20px; border-radius: 10px; background: #0078d7; color: #fff; font-size: 13px; text-align: center; }
```
